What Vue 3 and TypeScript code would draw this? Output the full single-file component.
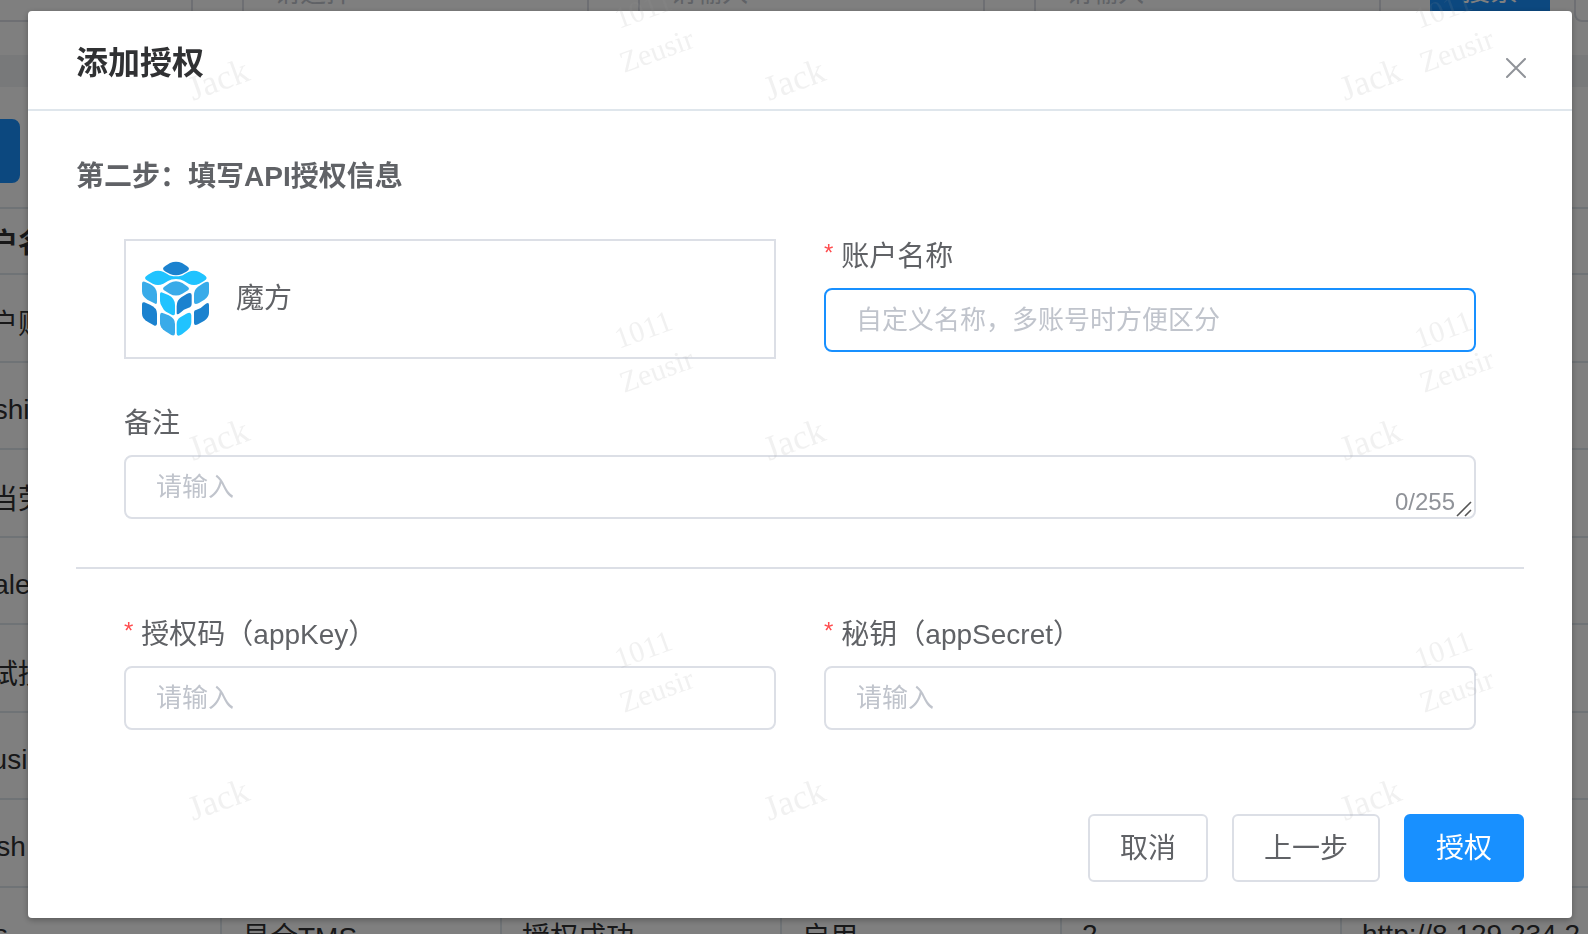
<script setup lang="ts">
import { computed, reactive } from 'vue'

interface AuthForm {
  account: string
  remark: string
  appKey: string
  appSecret: string
}

interface Row {
  name: string
  platform?: string
  status?: string
  state?: string
  count?: string
  url?: string
}

const form = reactive<AuthForm>({ account: '', remark: '', appKey: '', appSecret: '' })
const remarkLimit = 255
const remarkCount = computed(() => `${form.remark.length}/${remarkLimit}`)

const rows: Row[] = [
  { name: '账户账户' },
  { name: 'Yoshi' },
  { name: '麦当劳' },
  { name: 'beale' },
  { name: '测试授权' },
  { name: 'Jeusi' },
  { name: 'Kash' },
  {
    name: 'Yes',
    platform: '易仓TMS',
    status: '授权成功',
    state: '启用',
    count: '2',
    url: 'http://8.129.234.2',
  },
]

interface Mark {
  text: string
  x: number
  y: number
  size: number
}

function tile(text: string, x: number, y: number, dx: number, dy: number, size: number, cols: number, lines: number): Mark[] {
  const marks: Mark[] = []
  for (let c = 0; c < cols; c++) {
    for (let l = 0; l < lines; l++) {
      marks.push({ text, x: x + c * dx, y: y + l * dy, size })
    }
  }
  return marks
}

const marks: Mark[] = [
  ...tile('Jack', 193, 101, 576, 360, 35, 3, 3),
  ...tile('1011', 619, 29, 800, 320, 30, 2, 3),
  ...tile('Zeusir', 624, 73, 800, 320, 30, 2, 3),
]
</script>

<template>
  <div class="page">
    <div class="backdrop-page">
      <div class="filters">
        <input class="filter" type="text" aria-label="账户" />
        <input class="filter" type="text" placeholder="请选择" aria-label="平台" />
        <input class="filter" type="text" placeholder="请输入" aria-label="名称" />
        <input class="filter" type="text" placeholder="请输入" aria-label="备注" />
        <div class="filter-actions">
          <button class="btn primary search" type="button">搜索</button>
          <button class="btn reset" type="button" aria-label="重置"></button>
        </div>
      </div>
      <div class="band"></div>
      <div class="toolbar">
        <button class="btn primary add" type="button" aria-label="添加"></button>
      </div>
      <table class="list">
        <thead>
          <tr>
            <th>账户名称</th>
            <th></th>
            <th></th>
            <th></th>
            <th></th>
            <th></th>
          </tr>
        </thead>
        <tbody>
          <tr v-for="row in rows" :key="row.name">
            <td>{{ row.name }}</td>
            <td>{{ row.platform }}</td>
            <td>{{ row.status }}</td>
            <td>{{ row.state }}</td>
            <td>{{ row.count }}</td>
            <td>{{ row.url }}</td>
          </tr>
        </tbody>
      </table>
    </div>

    <div class="overlay">
      <form class="dialog" role="dialog" aria-labelledby="dialog-title" @submit.prevent>
        <header class="dialog-header">
          <h2 id="dialog-title">添加授权</h2>
          <button class="close" type="button" aria-label="关闭">
            <svg viewBox="0 0 20 20" width="20" height="20">
              <path d="M1 1L19 19M19 1L1 19" fill="none" stroke="#909399" stroke-width="2" stroke-linecap="round" />
            </svg>
          </button>
        </header>

        <div class="dialog-body">
          <h3>第二步：填写API授权信息</h3>

          <div class="section">
            <div class="grid">
              <div class="platform">
                <svg class="cube" viewBox="60 58 216 240" width="72" height="80" aria-hidden="true">
                  <g fill="#1b82cf">
                    <path d="M129 87Q129 83 137 78L150 70Q168 62 186 70L199 78Q207 83 207 87Q207 91 199 96L186 103Q168 111 150 103L137 96Q129 91 129 87Z" />
                    <path d="M66 194Q66 186 73 188L90 195Q111 204 111 222V251Q111 260 104 258L84 247Q66 237 66 222Z" />
                    <path d="M170 200Q170 182 184 173L200 163Q215 155 215 167V192Q215 201 206 204Q190 208 181 219Q170 228 170 220Z" />
                    <path d="M222 217Q222 211 230 210Q242 208 252 197Q267 184 267 196V220Q267 234 253 243L234 254Q222 260 222 250Z" />
                  </g>
                  <g fill="#20c3ff">
                    <path d="M75 115Q75 110 84 105L98 97Q114 90 131 97L143 104Q150 110 168 110Q186 110 193 104L205 97Q222 90 238 97L252 105Q260 110 260 115Q260 119 252 124L238 132Q222 140 206 132L192 124Q183 118 168 118Q153 118 144 124L130 132Q114 140 98 132L84 124Q75 119 75 115Z" />
                    <path d="M120 163Q120 156 128 159L145 166Q165 176 165 196V220Q165 230 155 225L138 216Q130 211 127 203Q120 194 120 184Z" />
                    <path d="M170 254Q170 240 181 233L199 222Q214 214 214 227V248Q214 262 202 271L186 284Q170 294 170 281Z" />
                  </g>
                  <g fill="#39abe9">
                    <path d="M129 147Q129 143 137 138L149 130Q168 119 187 130L199 138Q207 143 207 147Q207 151 199 155L187 162Q168 173 149 162L137 155Q129 151 129 147Z" />
                    <path d="M66 132Q66 123 74 126L90 133Q111 143 111 164V187Q111 197 103 191L82 180Q66 170 66 155Z" />
                    <path d="M222 166Q222 150 234 141L251 130Q267 121 267 132V157Q267 171 253 180L237 190Q222 197 222 187Z" />
                    <path d="M120 228Q120 217 128 220L146 227Q165 236 165 253V279Q165 291 154 286L135 274Q120 264 120 251Z" />
                  </g>
                </svg>
                <span>魔方</span>
              </div>
              <div class="field">
                <label class="required" for="account">账户名称</label>
                <input id="account" v-model="form.account" class="control active" type="text" placeholder="自定义名称，多账号时方便区分" />
              </div>
            </div>
            <div class="field">
              <label for="remark">备注</label>
              <div class="textarea-wrap">
                <textarea id="remark" v-model="form.remark" class="control" rows="1" :maxlength="remarkLimit" placeholder="请输入"></textarea>
                <div class="counter">
                  <span>{{ remarkCount }}</span>
                  <svg viewBox="0 0 16 16" width="16" height="16" aria-hidden="true">
                    <path d="M1 15L15 1M9 15L15 9" fill="none" stroke="#555" stroke-width="1.6" />
                  </svg>
                </div>
              </div>
            </div>
          </div>

          <hr />

          <div class="section">
            <div class="grid">
              <div class="field">
                <label class="required" for="app-key">授权码（appKey）</label>
                <input id="app-key" v-model="form.appKey" class="control" type="text" placeholder="请输入" />
              </div>
              <div class="field">
                <label class="required" for="app-secret">秘钥（appSecret）</label>
                <input id="app-secret" v-model="form.appSecret" class="control" type="text" placeholder="请输入" />
              </div>
            </div>
          </div>
        </div>

        <footer class="dialog-footer">
          <button class="btn" type="button">取消</button>
          <button class="btn" type="button">上一步</button>
          <button class="btn primary" type="submit">授权</button>
        </footer>
      </form>
    </div>

    <svg class="watermark" aria-hidden="true">
      <text
        v-for="(mark, i) in marks"
        :key="i"
        :font-size="mark.size"
        :transform="`translate(${mark.x} ${mark.y}) rotate(-20)`"
      >{{ mark.text }}</text>
    </svg>
  </div>
</template>

<style>
body {
  margin: 0;
}
</style>

<style scoped>
.page {
  height: 100vh;
  overflow: hidden;
  background: #fff;
  color: #606266;
  font-family: "Liberation Sans", "Noto Sans CJK SC", sans-serif;
  font-size: 28px;
}

.page *,
.page *::before {
  box-sizing: border-box;
}

button,
input,
textarea {
  font-family: inherit;
}

.filters {
  display: flex;
  gap: 49px;
  margin: -42px 0 33px -154px;
}

.filter {
  flex: none;
  width: 347px;
  height: 64px;
  padding: 6px 30px 0;
  border: 2px solid #dcdfe6;
  border-radius: 8px;
  font-size: 26px;
}

.filter-actions {
  display: flex;
  flex: none;
  gap: 24px;
}

.btn {
  height: 68px;
  padding: 2px 30px 0;
  border: 2px solid #dcdfe6;
  border-radius: 6px;
  background: #fff;
  color: #606266;
  font-size: 28px;
  line-height: 40px;
}

.btn.primary {
  border-color: #1890ff;
  background: #1890ff;
  color: #fff;
}

.search,
.reset,
.add {
  width: 120px;
  height: 64px;
  border-radius: 8px;
}

.search {
  padding-top: 4px;
}

.band {
  height: 32px;
  background: #f0f2f5;
}

.toolbar {
  padding: 32px 0 24px;
  margin-left: -100px;
  display: flex;
}

.list {
  width: 1680px;
  margin-left: -58px;
  border-collapse: separate;
  border-spacing: 0;
  border-top: 2px solid #dfe6ec;
  table-layout: fixed;
  color: #303133;
}

.list th,
.list td {
  height: 88px;
  padding: 8px 20px 0;
  border-right: 2px solid #dfe6ec;
  border-bottom: 2px solid #dfe6ec;
  text-align: left;
  white-space: nowrap;
}

.list tr:nth-child(even) td {
  height: 87px;
}

.list th {
  height: 66px;
  padding-top: 0;
}

.overlay {
  position: fixed;
  inset: 0;
  overflow: auto;
  background: rgba(0, 0, 0, 0.5);
}

.dialog {
  margin: 11px 16px 16px 28px;
  border-radius: 4px;
  background: #fff;
  box-shadow: 0 2px 6px rgba(0, 0, 0, 0.3);
}

.dialog-header {
  display: flex;
  align-items: flex-start;
  justify-content: space-between;
  padding: 30px 36px 20px 48px;
  border-bottom: 2px solid #dfe6ec;
}

h2,
h3 {
  margin: 0;
  line-height: 44px;
}

h2 {
  color: #303133;
  font-size: 32px;
}

h3 {
  margin-bottom: 40px;
  font-size: 28px;
}

.close {
  display: flex;
  align-items: center;
  justify-content: center;
  width: 40px;
  height: 42px;
  margin-top: 6px;
  padding: 0;
  border: 0;
  background: none;
}

.dialog-body {
  padding: 44px 48px 48px;
}

.section {
  display: flex;
  flex-direction: column;
  gap: 47px;
  padding: 0 48px;
}

.grid {
  display: grid;
  grid-template-columns: 1fr 1fr;
  gap: 48px;
}

.platform {
  display: flex;
  align-items: center;
  gap: 24px;
  height: 120px;
  padding: 0 14px;
  border: 2px solid #dcdfe6;
}

.platform span {
  line-height: 40px;
}

.field {
  display: flex;
  flex-direction: column;
  gap: 13px;
}

.field label {
  display: flex;
  line-height: 36px;
}

.required::before {
  content: "*";
  margin-right: 8px;
  color: #ff4d4f;
  font-size: 24px;
  line-height: 28px;
}

.control {
  display: block;
  width: 100%;
  height: 64px;
  padding: 0 30px;
  border: 2px solid #dcdfe6;
  border-radius: 8px;
  outline: none;
  background: #fff;
  color: #606266;
  font-size: 26px;
}

.control.active {
  border-color: #1890ff;
}

.control::placeholder,
.filter::placeholder {
  color: #c0c4cc;
}

textarea.control {
  padding: 10px 30px;
  line-height: 40px;
  resize: none;
  overflow: hidden;
}

.textarea-wrap {
  position: relative;
}

.counter {
  position: absolute;
  right: 4px;
  bottom: 2px;
  display: flex;
  align-items: flex-end;
  gap: 1px;
  color: #909399;
  font-size: 24px;
  line-height: 30px;
}

hr {
  height: 2px;
  margin: 48px 0;
  border: 0;
  background: #dcdfe6;
}

.dialog-footer {
  display: flex;
  justify-content: flex-end;
  gap: 24px;
  padding: 36px 48px;
}

.watermark {
  position: fixed;
  inset: 0;
  width: 100%;
  height: 100%;
  pointer-events: none;
  fill: rgba(150, 150, 150, 0.13);
  font-family: "Liberation Serif", serif;
}
</style>
